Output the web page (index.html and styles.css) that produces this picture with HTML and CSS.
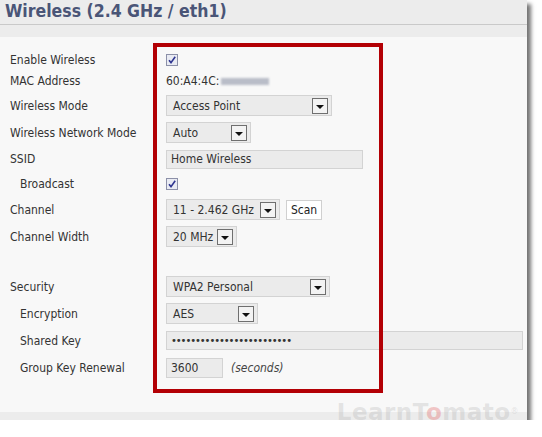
FILE: index.html
```html
<!DOCTYPE html>
<html>
<head>
<meta charset="utf-8">
<link rel="stylesheet" href="styles.css">
</head>
<body>
<div class="panel">
  <div class="head"><h1 class="title">Wireless (2.4 GHz / eth1)</h1></div>
  <div class="band"></div>
  <div class="content">
    <div class="form">
      <div class="row r-small">
        <span class="label">Enable Wireless</span>
        <span class="cb"><svg width="12" height="12" viewBox="0 0 12 12"><rect x="0.5" y="0.5" width="11" height="11" fill="#e9ebf3" stroke="#8c90a8"/><path d="M3 6.2 L5 8.6 L9.2 2.8" fill="none" stroke="#2e3590" stroke-width="1.6"/></svg></span>
      </div>
      <div class="row r-mac">
        <span class="label">MAC Address</span>
        <span class="value">60:A4:4C:<span class="blur"></span></span>
      </div>
      <div class="row">
        <span class="label">Wireless Mode</span>
        <span class="select w-ap"><span>Access Point</span><span class="arrow"></span></span>
      </div>
      <div class="row">
        <span class="label">Wireless Network Mode</span>
        <span class="select w-auto"><span>Auto</span><span class="arrow"></span></span>
      </div>
      <div class="row r-in">
        <span class="label">SSID</span>
        <span class="input w-ssid">Home Wireless</span>
      </div>
      <div class="row r-bc">
        <span class="label sub">Broadcast</span>
        <span class="cb"><svg width="12" height="12" viewBox="0 0 12 12"><rect x="0.5" y="0.5" width="11" height="11" fill="#e9ebf3" stroke="#8c90a8"/><path d="M3 6.2 L5 8.6 L9.2 2.8" fill="none" stroke="#2e3590" stroke-width="1.6"/></svg></span>
      </div>
      <div class="row">
        <span class="label">Channel</span>
        <span class="ctrls"><span class="select w-ch"><span>11 - 2.462 GHz</span><span class="arrow"></span></span><span class="btn">Scan</span></span>
      </div>
      <div class="row">
        <span class="label">Channel Width</span>
        <span class="select w-cw"><span>20 MHz</span><span class="arrow"></span></span>
      </div>
      <div class="spacer"></div>
      <div class="row">
        <span class="label">Security</span>
        <span class="select w-sec"><span>WPA2 Personal</span><span class="arrow"></span></span>
      </div>
      <div class="row">
        <span class="label sub">Encryption</span>
        <span class="select w-aes"><span>AES</span><span class="arrow"></span></span>
      </div>
      <div class="row">
        <span class="label sub">Shared Key</span>
        <span class="input w-key"><span class="dots">•••••••••••••••••••••••••</span></span>
      </div>
      <div class="row">
        <span class="label sub">Group Key Renewal</span>
        <span class="ctrls"><span class="input w-gk">3600</span><span class="hint">(seconds)</span></span>
      </div>
    </div>
    <div class="highlight"></div>
  </div>
  <div class="band bottom"></div>
  <div class="wm">LearnT<span class="tom">o</span>mato<span class="reg">®</span></div>
  <div class="com">.com</div>
</div>
</body>
</html>
```
FILE: styles.css
```css
html, body { margin: 0; padding: 0; background: #fff; }
body { font-family: "DejaVu Sans Condensed", "DejaVu Sans", sans-serif; font-size: 12px; color: #333; }

.panel {
  position: relative;
  width: 527px;
  background: #f8f8f8;
  box-shadow: 4px 4px 4px rgba(0,0,0,0.55);
}
.head {
  height: 24px;
  background: #ececec;
  border-bottom: 1px solid #c9c9c9;
}
.title {
  margin: 0;
  padding-left: 5px;
  font-size: 17.5px;
  line-height: 22px;
  font-weight: bold;
  color: #4a5577;
}
.band { height: 12px; background: #ececec; }
.band.bottom { height: 8px; }

.content { position: relative; padding: 16px 0 34px 10px; }
.form { display: flex; flex-direction: column; gap: 6px; }
.row {
  display: grid;
  grid-template-columns: 156px 1fr;
  align-items: center;
  height: 21px;
}
.r-small { height: 14px; }
.r-mac { height: 16px; }
.r-in { height: 20px; }
.r-bc { height: 18px; }
.spacer { height: 17px; }
.label { line-height: 14px; }
.label.sub { padding-left: 10px; }
.cb { display: flex; height: 12px; }
.value { display: flex; align-items: center; line-height: 14px; }
.blur {
  display: inline-block; width: 48px; height: 7px; margin-left: 2px;
  background: #b9bdc8; filter: blur(1.2px);
}
.select {
  box-sizing: border-box;
  height: 21px;
  display: flex; align-items: center; justify-content: space-between;
  background: #ebebeb;
  border: 1px solid #d3d3d3;
  padding: 0 3px 0 6px;
}
.arrow {
  box-sizing: border-box;
  width: 16px; height: 16px;
  border: 1px solid #6f6f6f;
  background: #f3f3f3;
  position: relative;
}
.arrow::after {
  content: "";
  position: absolute; left: 3px; top: 6px;
  border-left: 4px solid transparent; border-right: 4px solid transparent;
  border-top: 4px solid #111;
}
.w-ap { width: 166px; }
.w-auto { width: 85px; }
.w-ch { width: 114px; }
.w-cw { width: 71px; }
.w-sec { width: 164px; }
.w-aes { width: 92px; }
.input {
  box-sizing: border-box;
  height: 20px;
  display: flex; align-items: center;
  background: #ebebeb;
  border: 1px solid #d3d3d3;
  padding-left: 4px;
}
.w-ssid { width: 197px; height: 19px; }
.w-key { width: 357px; height: 19px; }
.w-gk { width: 57px; }
.dots { font-family: "DejaVu Sans", sans-serif; font-size: 10px; letter-spacing: -1.1px; color: #333; }
.ctrls { display: flex; align-items: center; gap: 6px; }
.btn {
  box-sizing: border-box;
  height: 20px; width: 36px;
  display: flex; align-items: center; justify-content: center;
  background: #fff; border: 1px solid #d0d0d0;
  color: #222;
}
.hint { font-style: italic; color: #444; margin-left: 2px; }

.highlight {
  position: absolute;
  left: 153px; top: 6px;
  width: 230px; height: 350px;
  box-sizing: border-box;
  border: 4px solid #b30005;
}

.wm {
  position: absolute;
  right: 8px; top: 400px;
  font-family: "DejaVu Sans", sans-serif;
  font-weight: bold;
  font-size: 23px;
  line-height: 24px;
  color: rgba(175,175,175,0.3);
  letter-spacing: 0.5px;
}
.wm .tom { color: rgba(225,100,100,0.35); }
.wm .reg { font-size: 8px; vertical-align: top; font-weight: normal; }
.com {
  position: absolute;
  right: 18px; top: 425px;
  font-family: "DejaVu Sans", sans-serif;
  font-size: 8px; line-height: 9px;
  color: rgba(170,170,170,0.45);
}
```
